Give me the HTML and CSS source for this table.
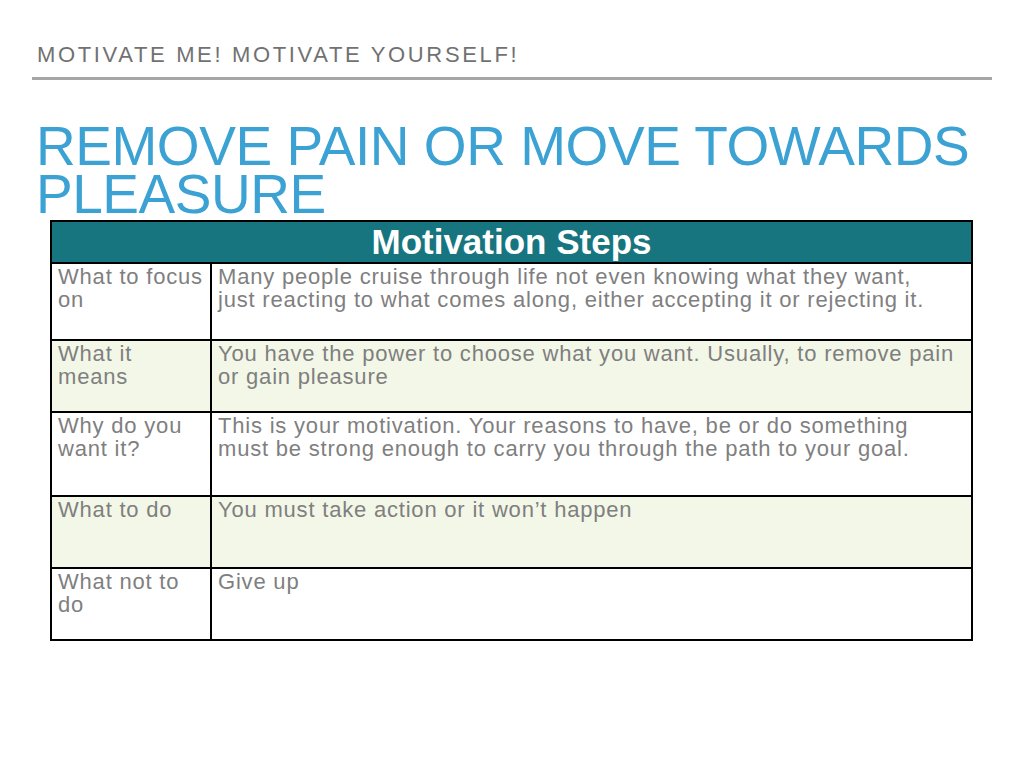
FILE: index.html
```html
<!DOCTYPE html>
<html>
<head>
<meta charset="utf-8">
<link rel="stylesheet" href="styles.css">
</head>
<body>
<div class="slide">
  <header class="top">
    <div class="kicker">MOTIVATE ME! MOTIVATE YOURSELF!</div>
    <div class="rule"></div>
  </header>
  <h1 class="title">REMOVE PAIN OR MOVE TOWARDS PLEASURE</h1>
  <table class="steps">
    <colgroup><col class="c1"><col class="c2"></colgroup>
    <thead>
      <tr><th colspan="2">Motivation Steps</th></tr>
    </thead>
    <tbody>
      <tr class="r1"><td class="k">What to focus on</td><td>Many people cruise through life not even knowing what they want,<br>just reacting to what comes along, either accepting it or rejecting it.</td></tr>
      <tr class="r2 alt"><td class="k">What it means</td><td>You have the power to choose what you want. Usually, to remove pain or gain pleasure</td></tr>
      <tr class="r3"><td class="k">Why do you want it?</td><td>This is your motivation. Your reasons to have, be or do something<br>must be strong enough to carry you through the path to your goal.</td></tr>
      <tr class="r4 alt"><td class="k">What to do</td><td>You must take action or it won’t happen</td></tr>
      <tr class="r5"><td class="k">What not to do</td><td>Give up</td></tr>
    </tbody>
  </table>
</div>
</body>
</html>
```
FILE: styles.css
```css
html, body {
  margin: 0;
  padding: 0;
  background: #ffffff;
}
body {
  font-family: "Liberation Sans", Arial, sans-serif;
  width: 1024px;
  height: 768px;
  overflow: hidden;
}
.slide {
  padding: 43px 32px 0 32px;
}
.kicker {
  margin-left: 5px;
  font-size: 22px;
  line-height: 24px;
  letter-spacing: 2.65px;
  color: #717171;
  white-space: nowrap;
}
.rule {
  margin-top: 10px;
  height: 3px;
  background: #a6a6a6;
}
.title {
  margin: 42px 0 0 4px;
  font-weight: normal;
  font-size: 55px;
  line-height: 48px;
  letter-spacing: -0.45px;
  color: #3ca2d4;
  width: 990px;
  height: 96px;
}
.steps {
  margin: 2px 0 0 18px;
  width: 923px;
  border-collapse: collapse;
  table-layout: fixed;
}
.steps col.c1 {
  width: 160px;
}
.steps th {
  background: #177580;
  color: #ffffff;
  font-size: 35px;
  font-weight: bold;
  height: 40px;
  padding: 0;
  line-height: 38px;
  border: 2px solid #000;
  text-align: center;
}
.steps td {
  border: 2px solid #000;
  vertical-align: top;
  padding: 1px 1px 0 6px;
  font-size: 22px;
  line-height: 23px;
  letter-spacing: 0.8px;
  color: #7f7f7f;
}
.steps td.k {
  padding-right: 4px;
}
.steps .alt td {
  background: #f3f7e7;
}
.r1 td { height: 74px; }
.r2 td { height: 69px; }
.r3 td { height: 81px; }
.r4 td { height: 69px; }
.r5 td { height: 69px; }
```
